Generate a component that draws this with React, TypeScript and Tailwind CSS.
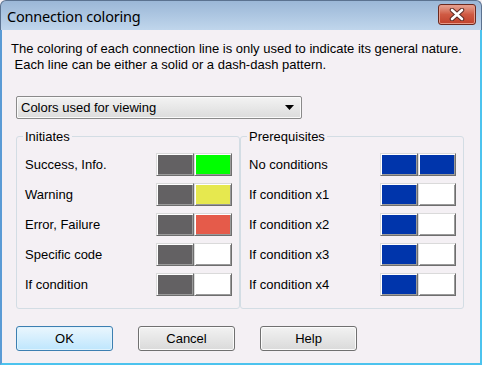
import React from "react";

const font = "font-['Liberation_Sans',Arial,sans-serif]";

function Swatch({ cls }: { cls: string }) {
  return (
    <div
      className={
        "w-[38px] h-[23px] border border-t-[#dadada] border-l-[#dadada] border-r-[#6e6e6e] border-b-[#6e6e6e] shadow-[inset_1px_1px_0_#ffffff,inset_-1px_-1px_0_#9a9a9a] " +
        cls
      }
    />
  );
}

function Row({ label, a, b }: { label: string; a: string; b: string }) {
  return (
    <div className="flex items-center justify-between h-[23px] pl-[2px]">
      <span className="text-[13px] leading-[15px] text-black">{label}</span>
      <div className="flex">
        <Swatch cls={a} />
        <Swatch cls={b} />
      </div>
    </div>
  );
}

function Group({
  title,
  rows,
}: {
  title: string;
  rows: { label: string; a: string; b: string }[];
}) {
  return (
    <fieldset className="w-[224px] border border-[#d3dde4] rounded-[3px] pl-[6px] pr-[7px] pb-[12px] m-0">
      <legend className="px-[2px] text-[13px] leading-[15px] text-black">{title}</legend>
      <div className="flex flex-col gap-[7px] mt-[9px]">
        {rows.map((r) => (
          <Row key={r.label} {...r} />
        ))}
      </div>
    </fieldset>
  );
}

function Btn({ label, focus }: { label: string; focus?: boolean }) {
  return (
    <button
      className={
        focus
          ? "w-[97px] h-[25px] rounded-[3px] border border-[#3c7fb1] bg-gradient-to-b from-[#eaf6fd] to-[#bee6fd] shadow-[inset_0_0_0_1px_#dff2fc] text-[13px] text-black"
          : "w-[97px] h-[25px] rounded-[3px] border border-[#707070] bg-gradient-to-b from-[#f2f2f2] to-[#dadada] shadow-[inset_0_0_0_1px_#fbfbfb] text-[13px] text-black"
      }
    >
      {label}
    </button>
  );
}

export default function App() {
  const gray = "bg-[#636163]";
  const white = "bg-[#ffffff]";
  const blue = "bg-[#0035ab]";
  const left = [
    { label: "Success, Info.", a: gray, b: "bg-[#00ff00]" },
    { label: "Warning", a: gray, b: "bg-[#e6e84f]" },
    { label: "Error, Failure", a: gray, b: "bg-[#e55b4a]" },
    { label: "Specific code", a: gray, b: white },
    { label: "If condition", a: gray, b: white },
  ];
  const right = [
    { label: "No conditions", a: blue, b: blue },
    { label: "If condition x1", a: blue, b: white },
    { label: "If condition x2", a: blue, b: white },
    { label: "If condition x3", a: blue, b: white },
    { label: "If condition x4", a: blue, b: white },
  ];
  return (
    <div className={"w-[482px] h-[365px] flex flex-col bg-[#f4f0f4] " + font}>
      <div className="h-[30px] flex items-center justify-between rounded-t-[6px] border border-b-0 border-[#5b7290] bg-gradient-to-b from-[#9bb7d7] to-[#c0d6ec] pl-[6px] pr-[5px]">
        <span className="text-[14.5px] leading-[18px] text-black font-['Noto_Sans','Liberation_Sans',sans-serif] tracking-[-0.2px]">
          Connection coloring
        </span>
        <div className="w-[38px] h-[21px] mb-[3px] flex items-center justify-center rounded-[3px] border border-[#6b2a20] bg-gradient-to-b from-[#e5a595] via-[#cf5a43] to-[#c0412c] shadow-[inset_0_0_0_1px_#e79a88]">
          <svg width="16" height="13" viewBox="0 0 16 13">
            <path d="M3 2 L13 11 M13 2 L3 11" stroke="#5a2a24" strokeWidth="4.5" strokeLinecap="round" />
            <path d="M3 2 L13 11 M13 2 L3 11" stroke="#ffffff" strokeWidth="2.6" strokeLinecap="round" />
          </svg>
        </div>
      </div>
      <div className="flex-1 flex flex-col border-l-2 border-r-2 border-b-2 border-l-[#5a9bd5] border-r-[#4cc3ee] border-b-[#4cc3ee] pl-[14px] pt-[11px] pb-[12px]">
        <div className="-ml-[5px] text-[13px] leading-[16px] text-black whitespace-pre">
          {"The coloring of each connection line is only used to indicate its general nature.\n Each line can be either a solid or a dash-dash pattern."}
        </div>
        <div className="mt-[23px] w-[286px] h-[23px] flex items-center justify-between rounded-[2px] border border-[#8a8a8a] bg-gradient-to-b from-[#f3f3f3] to-[#dcdcdc] shadow-[inset_0_0_0_1px_#fafafa] pl-[4px] pr-[7px]">
          <span className="text-[13px] text-black">Colors used for viewing</span>
          <svg width="9" height="5" viewBox="0 0 9 5">
            <path d="M0 0 H9 L4.5 5 Z" fill="#000" />
          </svg>
        </div>
        <div className="flex mt-[10px]">
          <Group title="Initiates" rows={left} />
          <Group title="Prerequisites" rows={right} />
        </div>
        <div className="flex gap-[25px] mt-[17px]">
          <Btn label="OK" focus />
          <Btn label="Cancel" />
          <Btn label="Help" />
        </div>
      </div>
    </div>
  );
}
